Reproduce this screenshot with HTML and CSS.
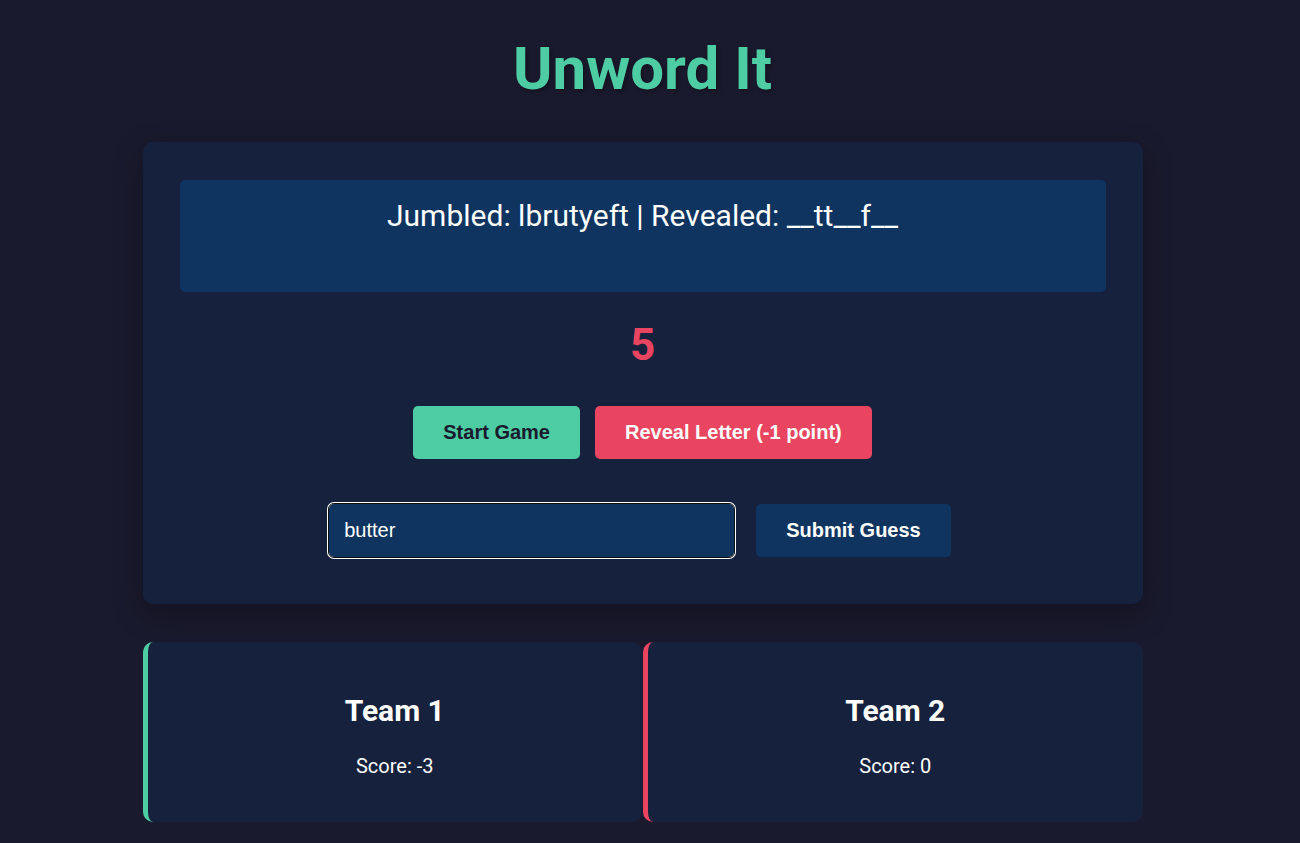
FILE: index.html
```html
<!DOCTYPE html>
<html lang="en">
<head>
<meta charset="utf-8">
<title>Unword It</title>
<link rel="stylesheet" href="styles.css">
</head>
<body>
  <div class="app">
    <h1 class="title">Unword It</h1>
    <section class="game-card">
      <div class="word-display">Jumbled: lbrutyeft | Revealed: __tt__f__</div>
      <div class="timer">5</div>
      <div class="controls">
        <button class="btn btn-start">Start Game</button>
        <button class="btn btn-reveal">Reveal Letter (-1 point)</button>
      </div>
      <div class="guess-row">
        <input class="guess-input" type="text" value="butter">
        <button class="btn btn-submit">Submit Guess</button>
      </div>
    </section>
    <section class="teams">
      <div class="team team-1">
        <h2 class="team-name">Team 1</h2>
        <p class="team-score">Score: -3</p>
      </div>
      <div class="team team-2">
        <h2 class="team-name">Team 2</h2>
        <p class="team-score">Score: 0</p>
      </div>
    </section>
  </div>
</body>
</html>
```
FILE: styles.css
```css
* { box-sizing: border-box; }

body {
  margin: 0;
  padding: 0 35px 40px 20px;
  background: #1a1a2e;
  color: #ffffff;
  font-family: Roboto, "Liberation Sans", Arial, sans-serif;
}

.app {
  max-width: 1000px;
  margin: 0 auto;
}

.title {
  margin: 33px 0 38px;
  text-align: center;
  font-size: 60px;
  font-weight: 700;
  line-height: normal;
  color: #4ecca3;
  text-shadow: 2px 2px 4px rgba(0, 0, 0, 0.35);
}

.game-card {
  background: #16213e;
  border-radius: 10px;
  padding: 38px 37px 47px;
  box-shadow: 0 10px 30px rgba(0, 0, 0, 0.3);
}

.word-display {
  background: #0f3460;
  border-radius: 5px;
  padding: 18px 20px 20px;
  min-height: 112px;
  text-align: center;
  font-size: 30px;
  line-height: normal;
}

.timer {
  margin: 27px 0 35px;
  text-align: center;
  font-size: 44px;
  font-weight: 700;
  line-height: normal;
  color: #e94560;
}

.controls {
  display: flex;
  justify-content: center;
  gap: 15px;
}

.btn {
  border: none;
  border-radius: 5px;
  padding: 15px 30px;
  font-family: "Liberation Sans", Arial, sans-serif;
  font-size: 20px;
  font-weight: 700;
  line-height: 23px;
  cursor: pointer;
}

.btn-start { background: #4ecca3; color: #1a1a2e; }
.btn-reveal { background: #e94560; color: #ffffff; }
.btn-submit { background: #0f3460; color: #ffffff; }

.guess-row {
  display: flex;
  justify-content: center;
  gap: 22px;
  margin-top: 45px;
  padding-right: 5px;
}

.guess-input {
  width: 405px;
  height: 53px;
  padding: 0 15px;
  border: none;
  border-radius: 5px;
  background: #0f3460;
  color: #ffffff;
  font-family: "Liberation Sans", Arial, sans-serif;
  font-size: 20px;
  outline: 1px solid #101010;
  box-shadow: 0 0 0 2px #ffffff;
}

.teams {
  display: flex;
  gap: 1px;
  margin-top: 38px;
}

.team {
  flex: 1;
  background: #16213e;
  border-radius: 10px;
  padding: 51px 20px 44px;
  text-align: center;
}

.team-1 { border-left: 5px solid #4ecca3; }
.team-2 { border-left: 5px solid #e94560; }

.team-name {
  margin: 0 0 26px;
  font-size: 30px;
  font-weight: 700;
  line-height: normal;
}

.team-score {
  margin: 0;
  font-size: 20px;
  line-height: normal;
}
```
